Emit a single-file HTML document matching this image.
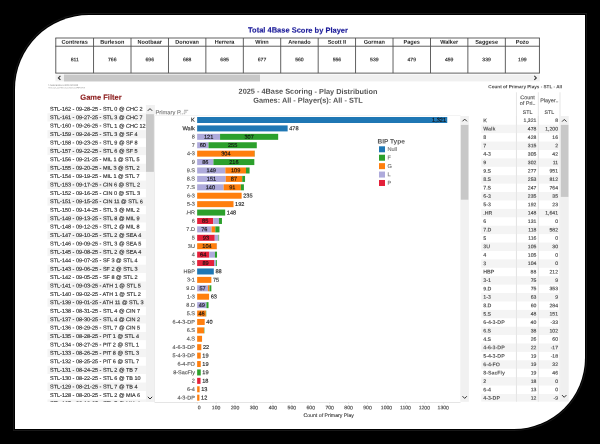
<!DOCTYPE html>
<html><head><meta charset="utf-8"><title>4Base Scoring</title>
<style>
html,body{margin:0;padding:0;background:#000;}
body{width:600px;height:444px;position:relative;overflow:hidden;font-family:"Liberation Sans",sans-serif;}
#wrap{position:absolute;left:0;top:0;width:600px;height:444px;will-change:transform;}
#panel{position:absolute;left:14.8px;top:14.8px;width:570.4px;height:414px;background:#fff;border-radius:74px 0 71px 0;box-shadow:0 0 0 1.1px #000,0 0 0 2px #181818;}
svg{position:absolute;left:0;top:0;font-family:"Liberation Sans",sans-serif;}
.b{font-weight:bold}
text{stroke-width:.13px}
</style></head><body>
<div id="wrap">
<div id="panel"></div>
<svg width="600" height="444" viewBox="0 0 600 444">

<text transform="rotate(.03 298.0 32.6)" x="298.00" y="32.63" font-size="7.5" fill="#1a1a99" stroke="#1a1a99" stroke-width="0.12" text-anchor="middle" class="b">Total 4Base Score by Player</text>
<rect x="55.35" y="37.55" width="484.50" height="0.90" fill="#505050"/>
<rect x="55.35" y="45.75" width="484.50" height="0.90" fill="#505050"/>
<rect x="55.35" y="72.65" width="484.50" height="0.90" fill="#505050"/>
<rect x="55.35" y="38.00" width="0.90" height="35.10" fill="#505050"/>
<rect x="93.13" y="38.00" width="0.90" height="35.10" fill="#505050"/>
<rect x="130.56" y="38.00" width="0.90" height="35.10" fill="#505050"/>
<rect x="167.99" y="38.00" width="0.90" height="35.10" fill="#505050"/>
<rect x="205.42" y="38.00" width="0.90" height="35.10" fill="#505050"/>
<rect x="242.85" y="38.00" width="0.90" height="35.10" fill="#505050"/>
<rect x="280.28" y="38.00" width="0.90" height="35.10" fill="#505050"/>
<rect x="317.71" y="38.00" width="0.90" height="35.10" fill="#505050"/>
<rect x="355.14" y="38.00" width="0.90" height="35.10" fill="#505050"/>
<rect x="392.57" y="38.00" width="0.90" height="35.10" fill="#505050"/>
<rect x="430.00" y="38.00" width="0.90" height="35.10" fill="#505050"/>
<rect x="467.43" y="38.00" width="0.90" height="35.10" fill="#505050"/>
<rect x="504.86" y="38.00" width="0.90" height="35.10" fill="#505050"/>
<rect x="538.95" y="38.00" width="0.90" height="35.10" fill="#505050"/>
<text transform="rotate(.03 74.7 43.7)" x="74.69" y="43.74" font-size="5.55" fill="#222" text-anchor="middle" class="b">Contreras</text>
<text transform="rotate(.03 74.7 61.3)" x="74.69" y="61.28" font-size="5.1" fill="#222" stroke="#222" text-anchor="middle">811</text>
<text transform="rotate(.03 112.3 43.7)" x="112.29" y="43.74" font-size="5.55" fill="#222" text-anchor="middle" class="b">Burleson</text>
<text transform="rotate(.03 112.3 61.3)" x="112.29" y="61.28" font-size="5.1" fill="#222" stroke="#222" text-anchor="middle">766</text>
<text transform="rotate(.03 149.7 43.7)" x="149.72" y="43.74" font-size="5.55" fill="#222" text-anchor="middle" class="b">Nootbaar</text>
<text transform="rotate(.03 149.7 61.3)" x="149.72" y="61.28" font-size="5.1" fill="#222" stroke="#222" text-anchor="middle">696</text>
<text transform="rotate(.03 187.2 43.7)" x="187.16" y="43.74" font-size="5.55" fill="#222" text-anchor="middle" class="b">Donovan</text>
<text transform="rotate(.03 187.2 61.3)" x="187.16" y="61.28" font-size="5.1" fill="#222" stroke="#222" text-anchor="middle">688</text>
<text transform="rotate(.03 224.6 43.7)" x="224.59" y="43.74" font-size="5.55" fill="#222" text-anchor="middle" class="b">Herrera</text>
<text transform="rotate(.03 224.6 61.3)" x="224.59" y="61.28" font-size="5.1" fill="#222" stroke="#222" text-anchor="middle">685</text>
<text transform="rotate(.03 262.0 43.7)" x="262.01" y="43.74" font-size="5.55" fill="#222" text-anchor="middle" class="b">Winn</text>
<text transform="rotate(.03 262.0 61.3)" x="262.01" y="61.28" font-size="5.1" fill="#222" stroke="#222" text-anchor="middle">677</text>
<text transform="rotate(.03 299.4 43.7)" x="299.44" y="43.74" font-size="5.55" fill="#222" text-anchor="middle" class="b">Arenado</text>
<text transform="rotate(.03 299.4 61.3)" x="299.44" y="61.28" font-size="5.1" fill="#222" stroke="#222" text-anchor="middle">560</text>
<text transform="rotate(.03 336.9 43.7)" x="336.88" y="43.74" font-size="5.55" fill="#222" text-anchor="middle" class="b">Scott II</text>
<text transform="rotate(.03 336.9 61.3)" x="336.88" y="61.28" font-size="5.1" fill="#222" stroke="#222" text-anchor="middle">556</text>
<text transform="rotate(.03 374.3 43.7)" x="374.30" y="43.74" font-size="5.55" fill="#222" text-anchor="middle" class="b">Gorman</text>
<text transform="rotate(.03 374.3 61.3)" x="374.30" y="61.28" font-size="5.1" fill="#222" stroke="#222" text-anchor="middle">539</text>
<text transform="rotate(.03 411.7 43.7)" x="411.74" y="43.74" font-size="5.55" fill="#222" text-anchor="middle" class="b">Pages</text>
<text transform="rotate(.03 411.7 61.3)" x="411.74" y="61.28" font-size="5.1" fill="#222" stroke="#222" text-anchor="middle">479</text>
<text transform="rotate(.03 449.2 43.7)" x="449.16" y="43.74" font-size="5.55" fill="#222" text-anchor="middle" class="b">Walker</text>
<text transform="rotate(.03 449.2 61.3)" x="449.16" y="61.28" font-size="5.1" fill="#222" stroke="#222" text-anchor="middle">459</text>
<text transform="rotate(.03 486.6 43.7)" x="486.59" y="43.74" font-size="5.55" fill="#222" text-anchor="middle" class="b">Saggese</text>
<text transform="rotate(.03 486.6 61.3)" x="486.59" y="61.28" font-size="5.1" fill="#222" stroke="#222" text-anchor="middle">339</text>
<text transform="rotate(.03 522.4 43.7)" x="522.36" y="43.74" font-size="5.55" fill="#222" text-anchor="middle" class="b">Pozo</text>
<text transform="rotate(.03 522.4 61.3)" x="522.36" y="61.28" font-size="5.1" fill="#222" stroke="#222" text-anchor="middle">199</text>
<rect x="55.40" y="74.60" width="484.40" height="6.80" fill="#f0f0f0"/>
<rect x="64.00" y="74.60" width="196.00" height="6.80" fill="#c8c8c8"/>
<path transform="translate(59.4,77.9)" d="M1 -2 L-1 0 L1 2" fill="none" stroke="#333" stroke-width="1.1"/>
<path transform="translate(535.3,77.9)" d="M-1 -2 L1 0 L-1 2" fill="none" stroke="#333" stroke-width="1.1"/>
<text transform="rotate(.03 48.2 85.9)" x="48.20" y="85.85" font-size="1.68" fill="#333" text-anchor="start">© Copied Baseline (c) 2025 | 2021-2025</text>
<text transform="rotate(.03 48.2 88.2)" x="48.20" y="88.23" font-size="1.63" fill="#444" text-anchor="start">4basescore.com/4basescore/reference/2025-stl-all</text>
<text transform="rotate(.03 101.0 99.7)" x="101.00" y="99.73" font-size="7.5" fill="#8b1a1a" stroke="#8b1a1a" stroke-width="0.15" text-anchor="middle" class="b">Game Filter</text>
<rect x="47.50" y="104.84" width="98.50" height="8.41" fill="#fff"/>
<text transform="rotate(.03 50.0 110.8)" x="50.00" y="110.77" font-size="5.5" fill="#2a2a2a" stroke="#2a2a2a" stroke-width="0.1" text-anchor="start">STL-162 - 09-28-25 - STL 0 @ CHC 2</text>
<rect x="47.50" y="113.25" width="98.50" height="8.41" fill="#f4f4f4"/>
<text transform="rotate(.03 50.0 119.2)" x="50.00" y="119.18" font-size="5.5" fill="#2a2a2a" stroke="#2a2a2a" stroke-width="0.1" text-anchor="start">STL-161 - 09-27-25 - STL 3 @ CHC 7</text>
<rect x="47.50" y="121.67" width="98.50" height="8.41" fill="#fff"/>
<text transform="rotate(.03 50.0 127.6)" x="50.00" y="127.60" font-size="5.5" fill="#2a2a2a" stroke="#2a2a2a" stroke-width="0.1" text-anchor="start">STL-160 - 09-26-25 - STL 1 @ CHC 12</text>
<rect x="47.50" y="130.09" width="98.50" height="8.41" fill="#f4f4f4"/>
<text transform="rotate(.03 50.0 136.0)" x="50.00" y="136.01" font-size="5.5" fill="#2a2a2a" stroke="#2a2a2a" stroke-width="0.1" text-anchor="start">STL-159 - 09-24-25 - STL 3 @ SF 4</text>
<rect x="47.50" y="138.50" width="98.50" height="8.41" fill="#fff"/>
<text transform="rotate(.03 50.0 144.4)" x="50.00" y="144.43" font-size="5.5" fill="#2a2a2a" stroke="#2a2a2a" stroke-width="0.1" text-anchor="start">STL-158 - 09-23-25 - STL 9 @ SF 8</text>
<rect x="47.50" y="146.91" width="98.50" height="8.41" fill="#f4f4f4"/>
<text transform="rotate(.03 50.0 152.8)" x="50.00" y="152.84" font-size="5.5" fill="#2a2a2a" stroke="#2a2a2a" stroke-width="0.1" text-anchor="start">STL-157 - 09-22-25 - STL 6 @ SF 5</text>
<rect x="47.50" y="155.33" width="98.50" height="8.41" fill="#fff"/>
<text transform="rotate(.03 50.0 161.3)" x="50.00" y="161.26" font-size="5.5" fill="#2a2a2a" stroke="#2a2a2a" stroke-width="0.1" text-anchor="start">STL-156 - 09-21-25 - MIL 1 @ STL 5</text>
<rect x="47.50" y="163.75" width="98.50" height="8.41" fill="#f4f4f4"/>
<text transform="rotate(.03 50.0 169.7)" x="50.00" y="169.67" font-size="5.5" fill="#2a2a2a" stroke="#2a2a2a" stroke-width="0.1" text-anchor="start">STL-155 - 09-20-25 - MIL 3 @ STL 2</text>
<rect x="47.50" y="172.16" width="98.50" height="8.41" fill="#fff"/>
<text transform="rotate(.03 50.0 178.1)" x="50.00" y="178.09" font-size="5.5" fill="#2a2a2a" stroke="#2a2a2a" stroke-width="0.1" text-anchor="start">STL-154 - 09-19-25 - MIL 1 @ STL 7</text>
<rect x="47.50" y="180.57" width="98.50" height="8.41" fill="#f4f4f4"/>
<text transform="rotate(.03 50.0 186.5)" x="50.00" y="186.50" font-size="5.5" fill="#2a2a2a" stroke="#2a2a2a" stroke-width="0.1" text-anchor="start">STL-153 - 09-17-25 - CIN 6 @ STL 2</text>
<rect x="47.50" y="188.99" width="98.50" height="8.41" fill="#fff"/>
<text transform="rotate(.03 50.0 194.9)" x="50.00" y="194.92" font-size="5.5" fill="#2a2a2a" stroke="#2a2a2a" stroke-width="0.1" text-anchor="start">STL-152 - 09-16-25 - CIN 0 @ STL 3</text>
<rect x="47.50" y="197.41" width="98.50" height="8.41" fill="#f4f4f4"/>
<text transform="rotate(.03 50.0 203.3)" x="50.00" y="203.33" font-size="5.5" fill="#2a2a2a" stroke="#2a2a2a" stroke-width="0.1" text-anchor="start">STL-151 - 09-15-25 - CIN 11 @ STL 6</text>
<rect x="47.50" y="205.82" width="98.50" height="8.41" fill="#fff"/>
<text transform="rotate(.03 50.0 211.7)" x="50.00" y="211.75" font-size="5.5" fill="#2a2a2a" stroke="#2a2a2a" stroke-width="0.1" text-anchor="start">STL-150 - 09-14-25 - STL 3 @ MIL 2</text>
<rect x="47.50" y="214.23" width="98.50" height="8.41" fill="#f4f4f4"/>
<text transform="rotate(.03 50.0 220.2)" x="50.00" y="220.16" font-size="5.5" fill="#2a2a2a" stroke="#2a2a2a" stroke-width="0.1" text-anchor="start">STL-149 - 09-13-25 - STL 8 @ MIL 9</text>
<rect x="47.50" y="222.65" width="98.50" height="8.41" fill="#fff"/>
<text transform="rotate(.03 50.0 228.6)" x="50.00" y="228.58" font-size="5.5" fill="#2a2a2a" stroke="#2a2a2a" stroke-width="0.1" text-anchor="start">STL-148 - 09-12-25 - STL 2 @ MIL 8</text>
<rect x="47.50" y="231.06" width="98.50" height="8.41" fill="#f4f4f4"/>
<text transform="rotate(.03 50.0 237.0)" x="50.00" y="236.99" font-size="5.5" fill="#2a2a2a" stroke="#2a2a2a" stroke-width="0.1" text-anchor="start">STL-147 - 09-10-25 - STL 2 @ SEA 4</text>
<rect x="47.50" y="239.48" width="98.50" height="8.41" fill="#fff"/>
<text transform="rotate(.03 50.0 245.4)" x="50.00" y="245.41" font-size="5.5" fill="#2a2a2a" stroke="#2a2a2a" stroke-width="0.1" text-anchor="start">STL-146 - 09-09-25 - STL 3 @ SEA 5</text>
<rect x="47.50" y="247.89" width="98.50" height="8.41" fill="#f4f4f4"/>
<text transform="rotate(.03 50.0 253.8)" x="50.00" y="253.82" font-size="5.5" fill="#2a2a2a" stroke="#2a2a2a" stroke-width="0.1" text-anchor="start">STL-145 - 09-08-25 - STL 2 @ SEA 4</text>
<rect x="47.50" y="256.31" width="98.50" height="8.41" fill="#fff"/>
<text transform="rotate(.03 50.0 262.2)" x="50.00" y="262.24" font-size="5.5" fill="#2a2a2a" stroke="#2a2a2a" stroke-width="0.1" text-anchor="start">STL-144 - 09-07-25 - SF 3 @ STL 4</text>
<rect x="47.50" y="264.73" width="98.50" height="8.41" fill="#f4f4f4"/>
<text transform="rotate(.03 50.0 270.7)" x="50.00" y="270.65" font-size="5.5" fill="#2a2a2a" stroke="#2a2a2a" stroke-width="0.1" text-anchor="start">STL-143 - 09-06-25 - SF 2 @ STL 3</text>
<rect x="47.50" y="273.14" width="98.50" height="8.41" fill="#fff"/>
<text transform="rotate(.03 50.0 279.1)" x="50.00" y="279.07" font-size="5.5" fill="#2a2a2a" stroke="#2a2a2a" stroke-width="0.1" text-anchor="start">STL-142 - 09-05-25 - SF 8 @ STL 2</text>
<rect x="47.50" y="281.55" width="98.50" height="8.41" fill="#f4f4f4"/>
<text transform="rotate(.03 50.0 287.5)" x="50.00" y="287.48" font-size="5.5" fill="#2a2a2a" stroke="#2a2a2a" stroke-width="0.1" text-anchor="start">STL-141 - 09-03-25 - ATH 1 @ STL 5</text>
<rect x="47.50" y="289.97" width="98.50" height="8.41" fill="#fff"/>
<text transform="rotate(.03 50.0 295.9)" x="50.00" y="295.90" font-size="5.5" fill="#2a2a2a" stroke="#2a2a2a" stroke-width="0.1" text-anchor="start">STL-140 - 09-02-25 - ATH 1 @ STL 2</text>
<rect x="47.50" y="298.38" width="98.50" height="8.41" fill="#f4f4f4"/>
<text transform="rotate(.03 50.0 304.3)" x="50.00" y="304.31" font-size="5.5" fill="#2a2a2a" stroke="#2a2a2a" stroke-width="0.1" text-anchor="start">STL-139 - 09-01-25 - ATH 11 @ STL 3</text>
<rect x="47.50" y="306.80" width="98.50" height="8.41" fill="#fff"/>
<text transform="rotate(.03 50.0 312.7)" x="50.00" y="312.73" font-size="5.5" fill="#2a2a2a" stroke="#2a2a2a" stroke-width="0.1" text-anchor="start">STL-138 - 08-31-25 - STL 4 @ CIN 7</text>
<rect x="47.50" y="315.21" width="98.50" height="8.41" fill="#f4f4f4"/>
<text transform="rotate(.03 50.0 321.1)" x="50.00" y="321.14" font-size="5.5" fill="#2a2a2a" stroke="#2a2a2a" stroke-width="0.1" text-anchor="start">STL-137 - 08-30-25 - STL 4 @ CIN 2</text>
<rect x="47.50" y="323.63" width="98.50" height="8.41" fill="#fff"/>
<text transform="rotate(.03 50.0 329.6)" x="50.00" y="329.56" font-size="5.5" fill="#2a2a2a" stroke="#2a2a2a" stroke-width="0.1" text-anchor="start">STL-136 - 08-29-25 - STL 7 @ CIN 5</text>
<rect x="47.50" y="332.04" width="98.50" height="8.41" fill="#f4f4f4"/>
<text transform="rotate(.03 50.0 338.0)" x="50.00" y="337.97" font-size="5.5" fill="#2a2a2a" stroke="#2a2a2a" stroke-width="0.1" text-anchor="start">STL-135 - 08-28-25 - PIT 1 @ STL 4</text>
<rect x="47.50" y="340.46" width="98.50" height="8.41" fill="#fff"/>
<text transform="rotate(.03 50.0 346.4)" x="50.00" y="346.39" font-size="5.5" fill="#2a2a2a" stroke="#2a2a2a" stroke-width="0.1" text-anchor="start">STL-134 - 08-27-25 - PIT 2 @ STL 1</text>
<rect x="47.50" y="348.88" width="98.50" height="8.41" fill="#f4f4f4"/>
<text transform="rotate(.03 50.0 354.8)" x="50.00" y="354.80" font-size="5.5" fill="#2a2a2a" stroke="#2a2a2a" stroke-width="0.1" text-anchor="start">STL-133 - 08-26-25 - PIT 8 @ STL 3</text>
<rect x="47.50" y="357.29" width="98.50" height="8.41" fill="#fff"/>
<text transform="rotate(.03 50.0 363.2)" x="50.00" y="363.22" font-size="5.5" fill="#2a2a2a" stroke="#2a2a2a" stroke-width="0.1" text-anchor="start">STL-132 - 08-25-25 - PIT 6 @ STL 7</text>
<rect x="47.50" y="365.70" width="98.50" height="8.41" fill="#f4f4f4"/>
<text transform="rotate(.03 50.0 371.6)" x="50.00" y="371.63" font-size="5.5" fill="#2a2a2a" stroke="#2a2a2a" stroke-width="0.1" text-anchor="start">STL-131 - 08-24-25 - STL 2 @ TB 7</text>
<rect x="47.50" y="374.12" width="98.50" height="8.41" fill="#fff"/>
<text transform="rotate(.03 50.0 380.0)" x="50.00" y="380.05" font-size="5.5" fill="#2a2a2a" stroke="#2a2a2a" stroke-width="0.1" text-anchor="start">STL-130 - 08-22-25 - STL 6 @ TB 10</text>
<rect x="47.50" y="382.53" width="98.50" height="8.41" fill="#f4f4f4"/>
<text transform="rotate(.03 50.0 388.5)" x="50.00" y="388.46" font-size="5.5" fill="#2a2a2a" stroke="#2a2a2a" stroke-width="0.1" text-anchor="start">STL-129 - 08-21-25 - STL 7 @ TB 4</text>
<rect x="47.50" y="390.95" width="98.50" height="8.41" fill="#fff"/>
<text transform="rotate(.03 50.0 396.9)" x="50.00" y="396.88" font-size="5.5" fill="#2a2a2a" stroke="#2a2a2a" stroke-width="0.1" text-anchor="start">STL-128 - 08-20-25 - STL 2 @ MIA 6</text>
<rect x="47.50" y="399.37" width="98.50" height="8.41" fill="#f4f4f4"/>
<text transform="rotate(.03 50.0 405.3)" x="50.00" y="405.29" font-size="5.5" fill="#2a2a2a" stroke="#2a2a2a" stroke-width="0.1" text-anchor="start">STL-127 - 08-19-25 - STL 7 @ MIA 4</text>
<rect x="47.00" y="402.00" width="100.00" height="12.00" fill="#fff"/>
<rect x="145.90" y="105.00" width="9.00" height="297.00" fill="#f1f1f1"/>
<rect x="146.00" y="114.20" width="7.90" height="57.65" fill="#c8c8c8"/>
<path transform="translate(150,109.7)" d="M-2.2 1.1 L0 -1.1 L2.2 1.1" fill="none" stroke="#333" stroke-width="1.0"/>
<path transform="translate(150,397.9)" d="M-2.2 -1.1 L0 1.1 L2.2 -1.1" fill="none" stroke="#333" stroke-width="1.0"/>
<text transform="rotate(.03 308.0 93.9)" x="308.00" y="93.88" font-size="7.35" fill="#555" text-anchor="middle" class="b">2025 - 4Base Scoring - Play Distribution</text>
<text transform="rotate(.03 308.0 102.7)" x="308.00" y="102.68" font-size="7.35" fill="#555" text-anchor="middle" class="b">Games: All - Player(s): All - STL</text>
<text transform="rotate(.03 155.5 114.3)" x="155.50" y="114.31" font-size="5.75" fill="#777" stroke="#777" text-anchor="start">Primary P..</text>
<path transform="translate(183.6,109.8)" d="M0.4 0.5h4.2M0.2 2.2h3.0M0 3.9h1.6" fill="none" stroke="#777" stroke-width="0.6"/>
<rect x="155.00" y="115.30" width="305.50" height="0.50" fill="#e6e6e6"/>
<text transform="rotate(.03 194.9 121.8)" x="194.90" y="121.79" font-size="5.7" fill="#222" stroke="#222" text-anchor="end">K</text>
<rect x="197.15" y="117.00" width="250.09" height="6.00" fill="#1f77b4"/>
<text transform="rotate(.03 446.0 121.9)" x="446.04" y="121.85" font-size="5.6" fill="#111" stroke="#111" text-anchor="end">1,321</text>
<text transform="rotate(.03 194.9 130.2)" x="194.90" y="130.21" font-size="5.7" fill="#222" stroke="#222" text-anchor="end">Walk</text>
<rect x="197.15" y="125.41" width="90.49" height="6.00" fill="#1f77b4"/>
<text transform="rotate(.03 289.2 130.3)" x="289.24" y="130.27" font-size="5.6" fill="#222" stroke="#222" text-anchor="start">478</text>
<text transform="rotate(.03 194.9 138.5)" x="194.90" y="138.55" font-size="5.5" fill="#555" stroke="#555" text-anchor="end">8</text>
<rect x="197.15" y="133.83" width="22.91" height="6.00" fill="#aeaadb"/>
<text transform="rotate(.03 208.6 138.7)" x="208.60" y="138.68" font-size="5.6" fill="#111" stroke="#111" text-anchor="middle">121</text>
<rect x="220.06" y="133.83" width="58.12" height="6.00" fill="#2ca02c"/>
<text transform="rotate(.03 249.1 138.7)" x="249.12" y="138.68" font-size="5.6" fill="#111" stroke="#111" text-anchor="middle">307</text>
<text transform="rotate(.03 194.9 147.0)" x="194.90" y="146.96" font-size="5.5" fill="#555" stroke="#555" text-anchor="end">7</text>
<rect x="197.15" y="142.25" width="11.36" height="6.00" fill="#aeaadb"/>
<text transform="rotate(.03 202.8 147.1)" x="202.83" y="147.10" font-size="5.6" fill="#111" stroke="#111" text-anchor="middle">60</text>
<rect x="208.51" y="142.25" width="48.28" height="6.00" fill="#2ca02c"/>
<text transform="rotate(.03 232.6 147.1)" x="232.65" y="147.10" font-size="5.6" fill="#111" stroke="#111" text-anchor="middle">255</text>
<text transform="rotate(.03 194.9 155.4)" x="194.90" y="155.38" font-size="5.5" fill="#555" stroke="#555" text-anchor="end">4-3</text>
<rect x="197.15" y="150.66" width="57.55" height="6.00" fill="#ff7f0e"/>
<text transform="rotate(.03 225.9 155.5)" x="225.93" y="155.51" font-size="5.6" fill="#111" stroke="#111" text-anchor="middle">304</text>
<rect x="254.70" y="150.66" width="0.19" height="6.00" fill="#2ca02c"/>
<text transform="rotate(.03 194.9 163.8)" x="194.90" y="163.79" font-size="5.5" fill="#555" stroke="#555" text-anchor="end">9</text>
<rect x="197.15" y="159.07" width="16.28" height="6.00" fill="#aeaadb"/>
<text transform="rotate(.03 205.3 163.9)" x="205.29" y="163.93" font-size="5.6" fill="#111" stroke="#111" text-anchor="middle">86</text>
<rect x="213.43" y="159.07" width="40.89" height="6.00" fill="#2ca02c"/>
<text transform="rotate(.03 233.9 163.9)" x="233.88" y="163.93" font-size="5.6" fill="#111" stroke="#111" text-anchor="middle">216</text>
<text transform="rotate(.03 194.9 172.2)" x="194.90" y="172.21" font-size="5.5" fill="#555" stroke="#555" text-anchor="end">9.S</text>
<rect x="197.15" y="167.49" width="28.21" height="6.00" fill="#aeaadb"/>
<text transform="rotate(.03 211.3 172.3)" x="211.25" y="172.34" font-size="5.6" fill="#111" stroke="#111" text-anchor="middle">149</text>
<rect x="225.36" y="167.49" width="20.64" height="6.00" fill="#ff7f0e"/>
<text transform="rotate(.03 235.7 172.3)" x="235.68" y="172.34" font-size="5.6" fill="#111" stroke="#111" text-anchor="middle">109</text>
<rect x="245.99" y="167.49" width="3.60" height="6.00" fill="#2ca02c"/>
<text transform="rotate(.03 194.9 180.6)" x="194.90" y="180.62" font-size="5.5" fill="#555" stroke="#555" text-anchor="end">8.S</text>
<rect x="197.15" y="175.91" width="28.59" height="6.00" fill="#aeaadb"/>
<text transform="rotate(.03 211.4 180.8)" x="211.44" y="180.76" font-size="5.6" fill="#111" stroke="#111" text-anchor="middle">151</text>
<rect x="225.74" y="175.91" width="16.47" height="6.00" fill="#ff7f0e"/>
<text transform="rotate(.03 234.0 180.8)" x="233.97" y="180.76" font-size="5.6" fill="#111" stroke="#111" text-anchor="middle">87</text>
<rect x="242.21" y="175.91" width="2.84" height="6.00" fill="#2ca02c"/>
<text transform="rotate(.03 194.9 189.0)" x="194.90" y="189.04" font-size="5.5" fill="#555" stroke="#555" text-anchor="end">7.S</text>
<rect x="197.15" y="184.32" width="26.50" height="6.00" fill="#aeaadb"/>
<text transform="rotate(.03 210.4 189.2)" x="210.40" y="189.17" font-size="5.6" fill="#111" stroke="#111" text-anchor="middle">140</text>
<rect x="223.65" y="184.32" width="17.23" height="6.00" fill="#ff7f0e"/>
<text transform="rotate(.03 232.3 189.2)" x="232.27" y="189.17" font-size="5.6" fill="#111" stroke="#111" text-anchor="middle">91</text>
<rect x="240.88" y="184.32" width="3.03" height="6.00" fill="#2ca02c"/>
<text transform="rotate(.03 194.9 197.5)" x="194.90" y="197.45" font-size="5.5" fill="#555" stroke="#555" text-anchor="end">6-3</text>
<rect x="197.15" y="192.73" width="44.49" height="6.00" fill="#ff7f0e"/>
<text transform="rotate(.03 243.2 197.6)" x="243.24" y="197.59" font-size="5.6" fill="#222" stroke="#222" text-anchor="start">235</text>
<text transform="rotate(.03 194.9 205.9)" x="194.90" y="205.87" font-size="5.5" fill="#555" stroke="#555" text-anchor="end">5-3</text>
<rect x="197.15" y="201.15" width="36.35" height="6.00" fill="#ff7f0e"/>
<text transform="rotate(.03 235.1 206.0)" x="235.10" y="206.00" font-size="5.6" fill="#222" stroke="#222" text-anchor="start">192</text>
<text transform="rotate(.03 194.9 214.3)" x="194.90" y="214.28" font-size="5.5" fill="#555" stroke="#555" text-anchor="end">.HR</text>
<rect x="197.15" y="209.56" width="28.02" height="6.00" fill="#2ca02c"/>
<text transform="rotate(.03 226.8 214.4)" x="226.77" y="214.42" font-size="5.6" fill="#222" stroke="#222" text-anchor="start">148</text>
<text transform="rotate(.03 194.9 222.7)" x="194.90" y="222.70" font-size="5.5" fill="#555" stroke="#555" text-anchor="end">6</text>
<rect x="197.15" y="217.98" width="16.09" height="6.00" fill="#e4203a"/>
<text transform="rotate(.03 205.2 222.8)" x="205.20" y="222.83" font-size="5.6" fill="#111" stroke="#111" text-anchor="middle">85</text>
<rect x="213.24" y="217.98" width="5.68" height="6.00" fill="#aeaadb"/>
<rect x="218.92" y="217.98" width="3.03" height="6.00" fill="#2ca02c"/>
<text transform="rotate(.03 194.9 231.1)" x="194.90" y="231.11" font-size="5.5" fill="#555" stroke="#555" text-anchor="end">7.D</text>
<rect x="197.15" y="226.39" width="14.39" height="6.00" fill="#aeaadb"/>
<text transform="rotate(.03 204.3 231.2)" x="204.34" y="231.25" font-size="5.6" fill="#111" stroke="#111" text-anchor="middle">76</text>
<rect x="211.54" y="226.39" width="3.79" height="6.00" fill="#ff7f0e"/>
<rect x="215.32" y="226.39" width="4.17" height="6.00" fill="#2ca02c"/>
<text transform="rotate(.03 194.9 239.5)" x="194.90" y="239.53" font-size="5.5" fill="#555" stroke="#555" text-anchor="end">5</text>
<rect x="197.15" y="234.81" width="17.61" height="6.00" fill="#e4203a"/>
<text transform="rotate(.03 206.0 239.7)" x="205.95" y="239.66" font-size="5.6" fill="#111" stroke="#111" text-anchor="middle">93</text>
<rect x="214.76" y="234.81" width="3.79" height="6.00" fill="#aeaadb"/>
<rect x="218.54" y="234.81" width="0.57" height="6.00" fill="#2ca02c"/>
<text transform="rotate(.03 194.9 247.9)" x="194.90" y="247.94" font-size="5.5" fill="#555" stroke="#555" text-anchor="end">3U</text>
<rect x="197.15" y="243.22" width="19.69" height="6.00" fill="#ff7f0e"/>
<text transform="rotate(.03 207.0 248.1)" x="206.99" y="248.08" font-size="5.6" fill="#111" stroke="#111" text-anchor="middle">104</text>
<rect x="216.84" y="243.22" width="0.19" height="6.00" fill="#aeaadb"/>
<text transform="rotate(.03 194.9 256.4)" x="194.90" y="256.36" font-size="5.5" fill="#555" stroke="#555" text-anchor="end">4</text>
<rect x="197.15" y="251.64" width="12.12" height="6.00" fill="#e4203a"/>
<text transform="rotate(.03 203.2 256.5)" x="203.21" y="256.49" font-size="5.6" fill="#111" stroke="#111" text-anchor="middle">64</text>
<rect x="209.27" y="251.64" width="5.68" height="6.00" fill="#aeaadb"/>
<rect x="214.95" y="251.64" width="2.08" height="6.00" fill="#2ca02c"/>
<text transform="rotate(.03 194.9 264.8)" x="194.90" y="264.77" font-size="5.5" fill="#555" stroke="#555" text-anchor="end">3</text>
<rect x="197.15" y="260.05" width="16.85" height="6.00" fill="#e4203a"/>
<text transform="rotate(.03 205.6 264.9)" x="205.57" y="264.91" font-size="5.6" fill="#111" stroke="#111" text-anchor="middle">89</text>
<rect x="214.00" y="260.05" width="1.89" height="6.00" fill="#aeaadb"/>
<rect x="215.89" y="260.05" width="0.95" height="6.00" fill="#2ca02c"/>
<text transform="rotate(.03 194.9 273.2)" x="194.90" y="273.19" font-size="5.5" fill="#555" stroke="#555" text-anchor="end">HBP</text>
<rect x="197.15" y="268.47" width="16.66" height="6.00" fill="#1f77b4"/>
<text transform="rotate(.03 215.4 273.3)" x="215.41" y="273.32" font-size="5.6" fill="#222" stroke="#222" text-anchor="start">88</text>
<text transform="rotate(.03 194.9 281.6)" x="194.90" y="281.60" font-size="5.5" fill="#555" stroke="#555" text-anchor="end">3-1</text>
<rect x="197.15" y="276.88" width="14.20" height="6.00" fill="#ff7f0e"/>
<text transform="rotate(.03 212.9 281.7)" x="212.95" y="281.74" font-size="5.6" fill="#222" stroke="#222" text-anchor="start">75</text>
<text transform="rotate(.03 194.9 290.0)" x="194.90" y="290.02" font-size="5.5" fill="#555" stroke="#555" text-anchor="end">9.D</text>
<rect x="197.15" y="285.30" width="10.79" height="6.00" fill="#aeaadb"/>
<text transform="rotate(.03 202.5 290.2)" x="202.55" y="290.15" font-size="5.6" fill="#111" stroke="#111" text-anchor="middle">57</text>
<rect x="207.94" y="285.30" width="1.51" height="6.00" fill="#ff7f0e"/>
<rect x="209.46" y="285.30" width="1.89" height="6.00" fill="#2ca02c"/>
<text transform="rotate(.03 194.9 298.4)" x="194.90" y="298.43" font-size="5.5" fill="#555" stroke="#555" text-anchor="end">1-3</text>
<rect x="197.15" y="293.71" width="11.93" height="6.00" fill="#ff7f0e"/>
<text transform="rotate(.03 210.7 298.6)" x="210.68" y="298.57" font-size="5.6" fill="#222" stroke="#222" text-anchor="start">63</text>
<text transform="rotate(.03 194.9 306.8)" x="194.90" y="306.85" font-size="5.5" fill="#555" stroke="#555" text-anchor="end">8.D</text>
<rect x="197.15" y="302.13" width="9.28" height="6.00" fill="#aeaadb"/>
<text transform="rotate(.03 201.8 307.0)" x="201.79" y="306.98" font-size="5.6" fill="#111" stroke="#111" text-anchor="middle">49</text>
<rect x="206.43" y="302.13" width="2.08" height="6.00" fill="#2ca02c"/>
<text transform="rotate(.03 194.9 315.3)" x="194.90" y="315.26" font-size="5.5" fill="#555" stroke="#555" text-anchor="end">5.S</text>
<rect x="197.15" y="310.54" width="8.71" height="6.00" fill="#ff7f0e"/>
<text transform="rotate(.03 201.5 315.4)" x="201.50" y="315.40" font-size="5.6" fill="#111" stroke="#111" text-anchor="middle">46</text>
<rect x="205.86" y="310.54" width="0.38" height="6.00" fill="#2ca02c"/>
<text transform="rotate(.03 194.9 323.7)" x="194.90" y="323.68" font-size="5.5" fill="#555" stroke="#555" text-anchor="end">6-4-3-DP</text>
<rect x="197.15" y="318.96" width="7.57" height="6.00" fill="#ff7f0e"/>
<text transform="rotate(.03 206.3 323.8)" x="206.32" y="323.81" font-size="5.6" fill="#222" stroke="#222" text-anchor="start">40</text>
<text transform="rotate(.03 194.9 332.1)" x="194.90" y="332.09" font-size="5.5" fill="#555" stroke="#555" text-anchor="end">6.S</text>
<rect x="197.15" y="327.38" width="6.82" height="6.00" fill="#ff7f0e"/>
<rect x="203.97" y="327.38" width="0.38" height="6.00" fill="#2ca02c"/>
<text transform="rotate(.03 194.9 340.5)" x="194.90" y="340.51" font-size="5.5" fill="#555" stroke="#555" text-anchor="end">4.S</text>
<rect x="197.15" y="335.79" width="4.92" height="6.00" fill="#ff7f0e"/>
<text transform="rotate(.03 194.9 348.9)" x="194.90" y="348.92" font-size="5.5" fill="#555" stroke="#555" text-anchor="end">4-6-3-DP</text>
<rect x="197.15" y="344.20" width="4.17" height="6.00" fill="#ff7f0e"/>
<text transform="rotate(.03 202.9 349.1)" x="202.92" y="349.06" font-size="5.6" fill="#222" stroke="#222" text-anchor="start">22</text>
<text transform="rotate(.03 194.9 357.3)" x="194.90" y="357.34" font-size="5.5" fill="#555" stroke="#555" text-anchor="end">5-4-3-DP</text>
<rect x="197.15" y="352.62" width="3.60" height="6.00" fill="#ff7f0e"/>
<text transform="rotate(.03 202.3 357.5)" x="202.35" y="357.47" font-size="5.6" fill="#222" stroke="#222" text-anchor="start">19</text>
<text transform="rotate(.03 194.9 365.8)" x="194.90" y="365.75" font-size="5.5" fill="#555" stroke="#555" text-anchor="end">6-4-FO</text>
<rect x="197.15" y="361.03" width="3.60" height="6.00" fill="#ff7f0e"/>
<text transform="rotate(.03 202.3 365.9)" x="202.35" y="365.89" font-size="5.6" fill="#222" stroke="#222" text-anchor="start">19</text>
<text transform="rotate(.03 194.9 374.2)" x="194.90" y="374.17" font-size="5.5" fill="#555" stroke="#555" text-anchor="end">8-SacFly</text>
<rect x="197.15" y="369.45" width="3.60" height="6.00" fill="#2ca02c"/>
<text transform="rotate(.03 202.3 374.3)" x="202.35" y="374.30" font-size="5.6" fill="#222" stroke="#222" text-anchor="start">19</text>
<text transform="rotate(.03 194.9 382.6)" x="194.90" y="382.58" font-size="5.5" fill="#555" stroke="#555" text-anchor="end">2</text>
<rect x="197.15" y="377.86" width="3.41" height="6.00" fill="#e4203a"/>
<text transform="rotate(.03 202.2 382.7)" x="202.16" y="382.72" font-size="5.6" fill="#222" stroke="#222" text-anchor="start">18</text>
<text transform="rotate(.03 194.9 391.0)" x="194.90" y="391.00" font-size="5.5" fill="#555" stroke="#555" text-anchor="end">6-4</text>
<rect x="197.15" y="386.28" width="2.46" height="6.00" fill="#ff7f0e"/>
<text transform="rotate(.03 201.2 391.1)" x="201.21" y="391.13" font-size="5.6" fill="#222" stroke="#222" text-anchor="start">13</text>
<text transform="rotate(.03 194.9 399.4)" x="194.90" y="399.41" font-size="5.5" fill="#555" stroke="#555" text-anchor="end">4-3-DP</text>
<rect x="197.15" y="394.69" width="2.27" height="6.00" fill="#ff7f0e"/>
<text transform="rotate(.03 201.0 399.5)" x="201.02" y="399.55" font-size="5.6" fill="#222" stroke="#222" text-anchor="start">12</text>
<rect x="155.00" y="402.00" width="305.50" height="0.60" fill="#d4d4d4"/>
<rect x="196.90" y="402.30" width="0.50" height="1.80" fill="#d4d4d4"/>
<rect x="215.83" y="402.30" width="0.50" height="1.80" fill="#d4d4d4"/>
<rect x="234.76" y="402.30" width="0.50" height="1.80" fill="#d4d4d4"/>
<rect x="253.70" y="402.30" width="0.50" height="1.80" fill="#d4d4d4"/>
<rect x="272.63" y="402.30" width="0.50" height="1.80" fill="#d4d4d4"/>
<rect x="291.56" y="402.30" width="0.50" height="1.80" fill="#d4d4d4"/>
<rect x="310.49" y="402.30" width="0.50" height="1.80" fill="#d4d4d4"/>
<rect x="329.42" y="402.30" width="0.50" height="1.80" fill="#d4d4d4"/>
<rect x="348.36" y="402.30" width="0.50" height="1.80" fill="#d4d4d4"/>
<rect x="367.29" y="402.30" width="0.50" height="1.80" fill="#d4d4d4"/>
<rect x="386.22" y="402.30" width="0.50" height="1.80" fill="#d4d4d4"/>
<rect x="405.15" y="402.30" width="0.50" height="1.80" fill="#d4d4d4"/>
<rect x="424.08" y="402.30" width="0.50" height="1.80" fill="#d4d4d4"/>
<rect x="443.02" y="402.30" width="0.50" height="1.80" fill="#d4d4d4"/>
<text transform="rotate(.03 199.2 409.4)" x="199.15" y="409.38" font-size="5.1" fill="#444" stroke="#444" text-anchor="middle">0</text>
<text transform="rotate(.03 216.1 409.4)" x="216.08" y="409.38" font-size="5.1" fill="#444" stroke="#444" text-anchor="middle">100</text>
<text transform="rotate(.03 235.0 409.4)" x="235.01" y="409.38" font-size="5.1" fill="#444" stroke="#444" text-anchor="middle">200</text>
<text transform="rotate(.03 253.9 409.4)" x="253.95" y="409.38" font-size="5.1" fill="#444" stroke="#444" text-anchor="middle">300</text>
<text transform="rotate(.03 272.9 409.4)" x="272.88" y="409.38" font-size="5.1" fill="#444" stroke="#444" text-anchor="middle">400</text>
<text transform="rotate(.03 291.8 409.4)" x="291.81" y="409.38" font-size="5.1" fill="#444" stroke="#444" text-anchor="middle">500</text>
<text transform="rotate(.03 310.7 409.4)" x="310.74" y="409.38" font-size="5.1" fill="#444" stroke="#444" text-anchor="middle">600</text>
<text transform="rotate(.03 329.7 409.4)" x="329.67" y="409.38" font-size="5.1" fill="#444" stroke="#444" text-anchor="middle">700</text>
<text transform="rotate(.03 348.6 409.4)" x="348.61" y="409.38" font-size="5.1" fill="#444" stroke="#444" text-anchor="middle">800</text>
<text transform="rotate(.03 367.5 409.4)" x="367.54" y="409.38" font-size="5.1" fill="#444" stroke="#444" text-anchor="middle">900</text>
<text transform="rotate(.03 386.5 409.4)" x="386.47" y="409.38" font-size="5.1" fill="#444" stroke="#444" text-anchor="middle">1000</text>
<text transform="rotate(.03 405.4 409.4)" x="405.40" y="409.38" font-size="5.1" fill="#444" stroke="#444" text-anchor="middle">1100</text>
<text transform="rotate(.03 424.3 409.4)" x="424.33" y="409.38" font-size="5.1" fill="#444" stroke="#444" text-anchor="middle">1200</text>
<text transform="rotate(.03 443.3 409.4)" x="443.27" y="409.38" font-size="5.1" fill="#444" stroke="#444" text-anchor="middle">1300</text>
<text transform="rotate(.03 328.7 417.1)" x="328.70" y="417.11" font-size="5.2" fill="#444" stroke="#444" text-anchor="middle">Count of Primary Play</text>
<rect x="460.30" y="116.00" width="8.60" height="285.80" fill="#f1f1f1"/>
<rect x="460.80" y="124.90" width="7.60" height="74.80" fill="#c8c8c8"/>
<path transform="translate(464.7,120.2)" d="M-2.2 1.1 L0 -1.1 L2.2 1.1" fill="none" stroke="#333" stroke-width="1.0"/>
<path transform="translate(464.7,397.3)" d="M-2.2 -1.1 L0 1.1 L2.2 -1.1" fill="none" stroke="#333" stroke-width="1.0"/>
<rect x="154.50" y="116.00" width="0.50" height="287.00" fill="#e6e6e6"/>
<text transform="rotate(.03 377.6 143.6)" x="377.60" y="143.58" font-size="6.5" fill="#555" text-anchor="start" class="b">BIP Type</text>
<rect x="379.00" y="146.30" width="6.00" height="6.00" fill="#1f77b4"/>
<text transform="rotate(.03 387.4 151.1)" x="387.40" y="151.05" font-size="5.6" fill="#777" stroke="#777" stroke-width="0.05" text-anchor="start">Null</text>
<rect x="379.00" y="154.72" width="6.00" height="6.00" fill="#2ca02c"/>
<text transform="rotate(.03 387.4 159.5)" x="387.40" y="159.47" font-size="5.6" fill="#777" stroke="#777" stroke-width="0.05" text-anchor="start">F</text>
<rect x="379.00" y="163.14" width="6.00" height="6.00" fill="#ff7f0e"/>
<text transform="rotate(.03 387.4 167.9)" x="387.40" y="167.89" font-size="5.6" fill="#777" stroke="#777" stroke-width="0.05" text-anchor="start">G</text>
<rect x="379.00" y="171.56" width="6.00" height="6.00" fill="#aeaadb"/>
<text transform="rotate(.03 387.4 176.3)" x="387.40" y="176.31" font-size="5.6" fill="#777" stroke="#777" stroke-width="0.05" text-anchor="start">L</text>
<rect x="379.00" y="179.98" width="6.00" height="6.00" fill="#e4203a"/>
<text transform="rotate(.03 387.4 184.7)" x="387.40" y="184.73" font-size="5.6" fill="#777" stroke="#777" stroke-width="0.05" text-anchor="start">P</text>
<text transform="rotate(.03 525.2 88.2)" x="525.20" y="88.21" font-size="4.65" fill="#444" text-anchor="middle" class="b">Count of Primary Plays - STL - All</text>
<rect x="515.95" y="92.30" width="0.90" height="309.30" fill="#e3e3e3"/>
<rect x="537.85" y="92.30" width="0.90" height="309.30" fill="#e3e3e3"/>
<rect x="559.55" y="92.30" width="0.90" height="309.30" fill="#e3e3e3"/>
<text transform="rotate(.03 527.6 99.3)" x="527.60" y="99.30" font-size="5.45" fill="#555" stroke="#555" stroke-width="0.2" text-anchor="middle">Count</text>
<text transform="rotate(.03 527.6 105.0)" x="527.60" y="105.00" font-size="5.45" fill="#555" stroke="#555" stroke-width="0.2" text-anchor="middle">of Pri..</text>
<text transform="rotate(.03 549.3 102.3)" x="549.30" y="102.32" font-size="5.5" fill="#555" stroke="#555" stroke-width="0.2" text-anchor="middle">Player..</text>
<text transform="rotate(.03 527.6 114.0)" x="527.60" y="114.05" font-size="5.3" fill="#555" stroke="#555" text-anchor="middle">STL</text>
<text transform="rotate(.03 549.3 114.0)" x="549.30" y="114.05" font-size="5.3" fill="#555" stroke="#555" text-anchor="middle">STL</text>
<text transform="rotate(.03 483.2 122.1)" x="483.20" y="122.15" font-size="5.3" fill="#555" text-anchor="start" class="b">K</text>
<text transform="rotate(.03 536.3 122.1)" x="536.30" y="122.08" font-size="5.1" fill="#444" stroke="#444" text-anchor="end">1,321</text>
<text transform="rotate(.03 558.0 122.1)" x="558.00" y="122.08" font-size="5.1" fill="#444" stroke="#444" text-anchor="end">8</text>
<rect x="481.20" y="124.71" width="78.60" height="8.41" fill="#f4f4f4"/>
<text transform="rotate(.03 483.2 130.6)" x="483.20" y="130.56" font-size="5.3" fill="#555" text-anchor="start" class="b">Walk</text>
<text transform="rotate(.03 536.3 130.5)" x="536.30" y="130.49" font-size="5.1" fill="#444" stroke="#444" text-anchor="end">478</text>
<text transform="rotate(.03 558.0 130.5)" x="558.00" y="130.49" font-size="5.1" fill="#444" stroke="#444" text-anchor="end">1,200</text>
<text transform="rotate(.03 483.2 139.0)" x="483.20" y="138.98" font-size="5.3" fill="#555" text-anchor="start" class="b">8</text>
<text transform="rotate(.03 536.3 138.9)" x="536.30" y="138.91" font-size="5.1" fill="#444" stroke="#444" text-anchor="end">428</text>
<text transform="rotate(.03 558.0 138.9)" x="558.00" y="138.91" font-size="5.1" fill="#444" stroke="#444" text-anchor="end">16</text>
<rect x="481.20" y="141.54" width="78.60" height="8.41" fill="#f4f4f4"/>
<text transform="rotate(.03 483.2 147.4)" x="483.20" y="147.39" font-size="5.3" fill="#555" text-anchor="start" class="b">7</text>
<text transform="rotate(.03 536.3 147.3)" x="536.30" y="147.32" font-size="5.1" fill="#444" stroke="#444" text-anchor="end">315</text>
<text transform="rotate(.03 558.0 147.3)" x="558.00" y="147.32" font-size="5.1" fill="#444" stroke="#444" text-anchor="end">2</text>
<text transform="rotate(.03 483.2 155.8)" x="483.20" y="155.81" font-size="5.3" fill="#555" text-anchor="start" class="b">4-3</text>
<text transform="rotate(.03 536.3 155.7)" x="536.30" y="155.74" font-size="5.1" fill="#444" stroke="#444" text-anchor="end">305</text>
<text transform="rotate(.03 558.0 155.7)" x="558.00" y="155.74" font-size="5.1" fill="#444" stroke="#444" text-anchor="end">42</text>
<rect x="481.20" y="158.37" width="78.60" height="8.41" fill="#f4f4f4"/>
<text transform="rotate(.03 483.2 164.2)" x="483.20" y="164.22" font-size="5.3" fill="#555" text-anchor="start" class="b">9</text>
<text transform="rotate(.03 536.3 164.2)" x="536.30" y="164.15" font-size="5.1" fill="#444" stroke="#444" text-anchor="end">302</text>
<text transform="rotate(.03 558.0 164.2)" x="558.00" y="164.15" font-size="5.1" fill="#444" stroke="#444" text-anchor="end">11</text>
<text transform="rotate(.03 483.2 172.6)" x="483.20" y="172.64" font-size="5.3" fill="#555" text-anchor="start" class="b">9.S</text>
<text transform="rotate(.03 536.3 172.6)" x="536.30" y="172.57" font-size="5.1" fill="#444" stroke="#444" text-anchor="end">277</text>
<text transform="rotate(.03 558.0 172.6)" x="558.00" y="172.57" font-size="5.1" fill="#444" stroke="#444" text-anchor="end">951</text>
<rect x="481.20" y="175.20" width="78.60" height="8.41" fill="#f4f4f4"/>
<text transform="rotate(.03 483.2 181.1)" x="483.20" y="181.05" font-size="5.3" fill="#555" text-anchor="start" class="b">8.S</text>
<text transform="rotate(.03 536.3 181.0)" x="536.30" y="180.98" font-size="5.1" fill="#444" stroke="#444" text-anchor="end">253</text>
<text transform="rotate(.03 558.0 181.0)" x="558.00" y="180.98" font-size="5.1" fill="#444" stroke="#444" text-anchor="end">812</text>
<text transform="rotate(.03 483.2 189.5)" x="483.20" y="189.47" font-size="5.3" fill="#555" text-anchor="start" class="b">7.S</text>
<text transform="rotate(.03 536.3 189.4)" x="536.30" y="189.40" font-size="5.1" fill="#444" stroke="#444" text-anchor="end">247</text>
<text transform="rotate(.03 558.0 189.4)" x="558.00" y="189.40" font-size="5.1" fill="#444" stroke="#444" text-anchor="end">764</text>
<rect x="481.20" y="192.03" width="78.60" height="8.41" fill="#f4f4f4"/>
<text transform="rotate(.03 483.2 197.9)" x="483.20" y="197.88" font-size="5.3" fill="#555" text-anchor="start" class="b">6-3</text>
<text transform="rotate(.03 536.3 197.8)" x="536.30" y="197.81" font-size="5.1" fill="#444" stroke="#444" text-anchor="end">235</text>
<text transform="rotate(.03 558.0 197.8)" x="558.00" y="197.81" font-size="5.1" fill="#444" stroke="#444" text-anchor="end">35</text>
<text transform="rotate(.03 483.2 206.3)" x="483.20" y="206.30" font-size="5.3" fill="#555" text-anchor="start" class="b">5-3</text>
<text transform="rotate(.03 536.3 206.2)" x="536.30" y="206.23" font-size="5.1" fill="#444" stroke="#444" text-anchor="end">192</text>
<text transform="rotate(.03 558.0 206.2)" x="558.00" y="206.23" font-size="5.1" fill="#444" stroke="#444" text-anchor="end">23</text>
<rect x="481.20" y="208.86" width="78.60" height="8.41" fill="#f4f4f4"/>
<text transform="rotate(.03 483.2 214.7)" x="483.20" y="214.71" font-size="5.3" fill="#555" text-anchor="start" class="b">.HR</text>
<text transform="rotate(.03 536.3 214.6)" x="536.30" y="214.64" font-size="5.1" fill="#444" stroke="#444" text-anchor="end">148</text>
<text transform="rotate(.03 558.0 214.6)" x="558.00" y="214.64" font-size="5.1" fill="#444" stroke="#444" text-anchor="end">1,641</text>
<text transform="rotate(.03 483.2 223.1)" x="483.20" y="223.13" font-size="5.3" fill="#555" text-anchor="start" class="b">6</text>
<text transform="rotate(.03 536.3 223.1)" x="536.30" y="223.06" font-size="5.1" fill="#444" stroke="#444" text-anchor="end">131</text>
<text transform="rotate(.03 558.0 223.1)" x="558.00" y="223.06" font-size="5.1" fill="#444" stroke="#444" text-anchor="end">0</text>
<rect x="481.20" y="225.69" width="78.60" height="8.41" fill="#f4f4f4"/>
<text transform="rotate(.03 483.2 231.5)" x="483.20" y="231.54" font-size="5.3" fill="#555" text-anchor="start" class="b">7.D</text>
<text transform="rotate(.03 536.3 231.5)" x="536.30" y="231.47" font-size="5.1" fill="#444" stroke="#444" text-anchor="end">118</text>
<text transform="rotate(.03 558.0 231.5)" x="558.00" y="231.47" font-size="5.1" fill="#444" stroke="#444" text-anchor="end">582</text>
<text transform="rotate(.03 483.2 240.0)" x="483.20" y="239.96" font-size="5.3" fill="#555" text-anchor="start" class="b">5</text>
<text transform="rotate(.03 536.3 239.9)" x="536.30" y="239.89" font-size="5.1" fill="#444" stroke="#444" text-anchor="end">116</text>
<text transform="rotate(.03 558.0 239.9)" x="558.00" y="239.89" font-size="5.1" fill="#444" stroke="#444" text-anchor="end">0</text>
<rect x="481.20" y="242.52" width="78.60" height="8.41" fill="#f4f4f4"/>
<text transform="rotate(.03 483.2 248.4)" x="483.20" y="248.37" font-size="5.3" fill="#555" text-anchor="start" class="b">3U</text>
<text transform="rotate(.03 536.3 248.3)" x="536.30" y="248.30" font-size="5.1" fill="#444" stroke="#444" text-anchor="end">105</text>
<text transform="rotate(.03 558.0 248.3)" x="558.00" y="248.30" font-size="5.1" fill="#444" stroke="#444" text-anchor="end">30</text>
<text transform="rotate(.03 483.2 256.8)" x="483.20" y="256.79" font-size="5.3" fill="#555" text-anchor="start" class="b">4</text>
<text transform="rotate(.03 536.3 256.7)" x="536.30" y="256.72" font-size="5.1" fill="#444" stroke="#444" text-anchor="end">105</text>
<text transform="rotate(.03 558.0 256.7)" x="558.00" y="256.72" font-size="5.1" fill="#444" stroke="#444" text-anchor="end">0</text>
<rect x="481.20" y="259.35" width="78.60" height="8.41" fill="#f4f4f4"/>
<text transform="rotate(.03 483.2 265.2)" x="483.20" y="265.20" font-size="5.3" fill="#555" text-anchor="start" class="b">3</text>
<text transform="rotate(.03 536.3 265.1)" x="536.30" y="265.13" font-size="5.1" fill="#444" stroke="#444" text-anchor="end">104</text>
<text transform="rotate(.03 558.0 265.1)" x="558.00" y="265.13" font-size="5.1" fill="#444" stroke="#444" text-anchor="end">0</text>
<text transform="rotate(.03 483.2 273.6)" x="483.20" y="273.62" font-size="5.3" fill="#555" text-anchor="start" class="b">HBP</text>
<text transform="rotate(.03 536.3 273.5)" x="536.30" y="273.55" font-size="5.1" fill="#444" stroke="#444" text-anchor="end">88</text>
<text transform="rotate(.03 558.0 273.5)" x="558.00" y="273.55" font-size="5.1" fill="#444" stroke="#444" text-anchor="end">212</text>
<rect x="481.20" y="276.18" width="78.60" height="8.41" fill="#f4f4f4"/>
<text transform="rotate(.03 483.2 282.0)" x="483.20" y="282.03" font-size="5.3" fill="#555" text-anchor="start" class="b">3-1</text>
<text transform="rotate(.03 536.3 282.0)" x="536.30" y="281.96" font-size="5.1" fill="#444" stroke="#444" text-anchor="end">75</text>
<text transform="rotate(.03 558.0 282.0)" x="558.00" y="281.96" font-size="5.1" fill="#444" stroke="#444" text-anchor="end">9</text>
<text transform="rotate(.03 483.2 290.4)" x="483.20" y="290.45" font-size="5.3" fill="#555" text-anchor="start" class="b">9.D</text>
<text transform="rotate(.03 536.3 290.4)" x="536.30" y="290.38" font-size="5.1" fill="#444" stroke="#444" text-anchor="end">75</text>
<text transform="rotate(.03 558.0 290.4)" x="558.00" y="290.38" font-size="5.1" fill="#444" stroke="#444" text-anchor="end">353</text>
<rect x="481.20" y="293.01" width="78.60" height="8.41" fill="#f4f4f4"/>
<text transform="rotate(.03 483.2 298.9)" x="483.20" y="298.86" font-size="5.3" fill="#555" text-anchor="start" class="b">1-3</text>
<text transform="rotate(.03 536.3 298.8)" x="536.30" y="298.79" font-size="5.1" fill="#444" stroke="#444" text-anchor="end">63</text>
<text transform="rotate(.03 558.0 298.8)" x="558.00" y="298.79" font-size="5.1" fill="#444" stroke="#444" text-anchor="end">9</text>
<text transform="rotate(.03 483.2 307.3)" x="483.20" y="307.28" font-size="5.3" fill="#555" text-anchor="start" class="b">8.D</text>
<text transform="rotate(.03 536.3 307.2)" x="536.30" y="307.21" font-size="5.1" fill="#444" stroke="#444" text-anchor="end">60</text>
<text transform="rotate(.03 558.0 307.2)" x="558.00" y="307.21" font-size="5.1" fill="#444" stroke="#444" text-anchor="end">284</text>
<rect x="481.20" y="309.84" width="78.60" height="8.41" fill="#f4f4f4"/>
<text transform="rotate(.03 483.2 315.7)" x="483.20" y="315.69" font-size="5.3" fill="#555" text-anchor="start" class="b">5.S</text>
<text transform="rotate(.03 536.3 315.6)" x="536.30" y="315.62" font-size="5.1" fill="#444" stroke="#444" text-anchor="end">48</text>
<text transform="rotate(.03 558.0 315.6)" x="558.00" y="315.62" font-size="5.1" fill="#444" stroke="#444" text-anchor="end">151</text>
<text transform="rotate(.03 483.2 324.1)" x="483.20" y="324.11" font-size="5.3" fill="#555" text-anchor="start" class="b">6-4-3-DP</text>
<text transform="rotate(.03 536.3 324.0)" x="536.30" y="324.04" font-size="5.1" fill="#444" stroke="#444" text-anchor="end">40</text>
<text transform="rotate(.03 558.0 324.0)" x="558.00" y="324.04" font-size="5.1" fill="#444" stroke="#444" text-anchor="end">-33</text>
<rect x="481.20" y="326.67" width="78.60" height="8.41" fill="#f4f4f4"/>
<text transform="rotate(.03 483.2 332.5)" x="483.20" y="332.52" font-size="5.3" fill="#555" text-anchor="start" class="b">6.S</text>
<text transform="rotate(.03 536.3 332.5)" x="536.30" y="332.45" font-size="5.1" fill="#444" stroke="#444" text-anchor="end">38</text>
<text transform="rotate(.03 558.0 332.5)" x="558.00" y="332.45" font-size="5.1" fill="#444" stroke="#444" text-anchor="end">102</text>
<text transform="rotate(.03 483.2 340.9)" x="483.20" y="340.94" font-size="5.3" fill="#555" text-anchor="start" class="b">4.S</text>
<text transform="rotate(.03 536.3 340.9)" x="536.30" y="340.87" font-size="5.1" fill="#444" stroke="#444" text-anchor="end">26</text>
<text transform="rotate(.03 558.0 340.9)" x="558.00" y="340.87" font-size="5.1" fill="#444" stroke="#444" text-anchor="end">60</text>
<rect x="481.20" y="343.50" width="78.60" height="8.41" fill="#f4f4f4"/>
<text transform="rotate(.03 483.2 349.4)" x="483.20" y="349.35" font-size="5.3" fill="#555" text-anchor="start" class="b">4-6-3-DP</text>
<text transform="rotate(.03 536.3 349.3)" x="536.30" y="349.28" font-size="5.1" fill="#444" stroke="#444" text-anchor="end">22</text>
<text transform="rotate(.03 558.0 349.3)" x="558.00" y="349.28" font-size="5.1" fill="#444" stroke="#444" text-anchor="end">-17</text>
<text transform="rotate(.03 483.2 357.8)" x="483.20" y="357.77" font-size="5.3" fill="#555" text-anchor="start" class="b">5-4-3-DP</text>
<text transform="rotate(.03 536.3 357.7)" x="536.30" y="357.70" font-size="5.1" fill="#444" stroke="#444" text-anchor="end">19</text>
<text transform="rotate(.03 558.0 357.7)" x="558.00" y="357.70" font-size="5.1" fill="#444" stroke="#444" text-anchor="end">-18</text>
<rect x="481.20" y="360.33" width="78.60" height="8.41" fill="#f4f4f4"/>
<text transform="rotate(.03 483.2 366.2)" x="483.20" y="366.18" font-size="5.3" fill="#555" text-anchor="start" class="b">6-4-FO</text>
<text transform="rotate(.03 536.3 366.1)" x="536.30" y="366.11" font-size="5.1" fill="#444" stroke="#444" text-anchor="end">19</text>
<text transform="rotate(.03 558.0 366.1)" x="558.00" y="366.11" font-size="5.1" fill="#444" stroke="#444" text-anchor="end">32</text>
<text transform="rotate(.03 483.2 374.6)" x="483.20" y="374.60" font-size="5.3" fill="#555" text-anchor="start" class="b">8-SacFly</text>
<text transform="rotate(.03 536.3 374.5)" x="536.30" y="374.53" font-size="5.1" fill="#444" stroke="#444" text-anchor="end">19</text>
<text transform="rotate(.03 558.0 374.5)" x="558.00" y="374.53" font-size="5.1" fill="#444" stroke="#444" text-anchor="end">46</text>
<rect x="481.20" y="377.16" width="78.60" height="8.41" fill="#f4f4f4"/>
<text transform="rotate(.03 483.2 383.0)" x="483.20" y="383.01" font-size="5.3" fill="#555" text-anchor="start" class="b">2</text>
<text transform="rotate(.03 536.3 382.9)" x="536.30" y="382.94" font-size="5.1" fill="#444" stroke="#444" text-anchor="end">18</text>
<text transform="rotate(.03 558.0 382.9)" x="558.00" y="382.94" font-size="5.1" fill="#444" stroke="#444" text-anchor="end">0</text>
<text transform="rotate(.03 483.2 391.4)" x="483.20" y="391.43" font-size="5.3" fill="#555" text-anchor="start" class="b">6-4</text>
<text transform="rotate(.03 536.3 391.4)" x="536.30" y="391.36" font-size="5.1" fill="#444" stroke="#444" text-anchor="end">13</text>
<text transform="rotate(.03 558.0 391.4)" x="558.00" y="391.36" font-size="5.1" fill="#444" stroke="#444" text-anchor="end">0</text>
<rect x="481.20" y="393.99" width="78.60" height="7.61" fill="#f4f4f4"/>
<text transform="rotate(.03 483.2 399.8)" x="483.20" y="399.84" font-size="5.3" fill="#555" text-anchor="start" class="b">4-3-DP</text>
<text transform="rotate(.03 536.3 399.8)" x="536.30" y="399.77" font-size="5.1" fill="#444" stroke="#444" text-anchor="end">12</text>
<text transform="rotate(.03 558.0 399.8)" x="558.00" y="399.77" font-size="5.1" fill="#444" stroke="#444" text-anchor="end">-9</text>
<rect x="515.95" y="116.00" width="0.90" height="285.60" fill="#e3e3e3"/>
<rect x="537.85" y="116.00" width="0.90" height="285.60" fill="#e3e3e3"/>
<rect x="560.40" y="116.00" width="8.30" height="285.60" fill="#f0f0f0"/>
<rect x="560.80" y="124.90" width="7.60" height="72.00" fill="#c8c8c8"/>
<path transform="translate(564.3,120.5)" d="M-2.2 1.1 L0 -1.1 L2.2 1.1" fill="none" stroke="#333" stroke-width="1.0"/>
<path transform="translate(564.2,396.2)" d="M-2.2 -1.1 L0 1.1 L2.2 -1.1" fill="none" stroke="#333" stroke-width="1.0"/>
</svg></div></body></html>
